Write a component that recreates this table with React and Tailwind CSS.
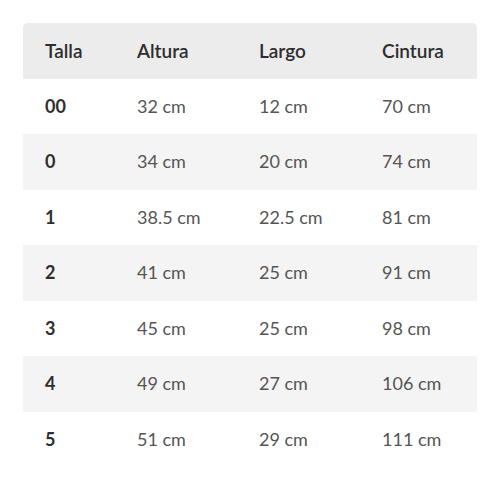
export default function App() {
  const rows = [
    ["00", "32 cm", "12 cm", "70 cm"],
    ["0", "34 cm", "20 cm", "74 cm"],
    ["1", "38.5 cm", "22.5 cm", "81 cm"],
    ["2", "41 cm", "25 cm", "91 cm"],
    ["3", "45 cm", "25 cm", "98 cm"],
    ["4", "49 cm", "27 cm", "106 cm"],
    ["5", "51 cm", "29 cm", "111 cm"],
  ];
  const cols = ["w-[92px]", "w-[122px]", "w-[123px]", "w-[117px]"];
  return (
    <div className="w-[500px] h-[489px] bg-white pt-[23px] px-[23px]" style={{ fontFamily: "Lato, 'Open Sans', sans-serif" }}>
      <div className="w-[454px]">
        <div className="flex items-center h-[55.5px] bg-[#ececec] rounded-t-[5px] text-[19px] font-semibold text-[#2e2e2e]">
          {["Talla", "Altura", "Largo", "Cintura"].map((h, i) => (
            <div key={h} className={`${cols[i]} pl-[22px]`}>{h}</div>
          ))}
        </div>
        {rows.map((r, ri) => (
          <div key={ri} className={`flex items-center h-[55.5px] text-[18px] ${ri % 2 === 1 ? "bg-[#f4f4f4]" : "bg-white"}`}>
            {r.map((c, i) => (
              <div key={i} className={`${cols[i]} pl-[22px] ${i === 0 ? "font-bold text-[#2e2e2e]" : "font-normal text-[#555555]"}`}>{c}</div>
            ))}
          </div>
        ))}
      </div>
    </div>
  );
}
